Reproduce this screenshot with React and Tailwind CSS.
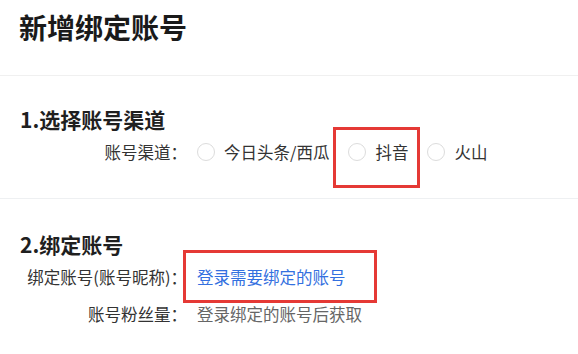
import React from "react";

const Radio = ({ label, marked }) => (
  <span className="relative flex items-center mr-[19px]">
    <span className="w-[18px] h-[18px] rounded-full border border-[#dcdcdc] bg-white" />
    <span className="ml-[9px] text-[#333]">{label}</span>
    {marked && (
      <span className="absolute left-[-15px] top-[-13px] w-[87px] h-[61px] border-[3px] border-[#e53935]" />
    )}
  </span>
);

const App = () => {
  return (
    <div
      className="w-[578px] h-[354px] bg-white overflow-hidden text-[#333]"
      style={{ fontFamily: '"Noto Sans CJK SC", "Noto Sans", sans-serif' }}
    >
      <div className="h-[76px] pt-[12px] pl-[19px] border-b border-[#f0f0f0]">
        <h1 className="text-[28px] leading-[30px] font-bold text-[#1a1a1a]">
          新增绑定账号
        </h1>
      </div>

      <section className="pt-[29px] pb-[34px] border-b border-[#eef0f2]">
        <h2 className="pl-[20px] text-[21px] leading-[28px] font-semibold text-[#1f1f1f]">
          1.选择账号渠道
        </h2>
        <div className="mt-[7px] flex items-center text-[16.5px] leading-[24px]">
          <span className="w-[187px] text-right">账号渠道：</span>
          <div className="ml-[10px] flex items-center">
            <Radio label="今日头条/西瓜" />
            <Radio label="抖音" marked />
            <Radio label="火山" />
          </div>
        </div>
      </section>

      <section className="pt-[31px]">
        <h2 className="pl-[20px] text-[21px] leading-[28px] font-semibold text-[#1f1f1f]">
          2.绑定账号
        </h2>
        <div className="mt-[7px] flex items-center text-[16.5px] leading-[24px]">
          <span className="w-[187px] text-right">绑定账号(账号昵称)：</span>
          <span className="relative ml-[10px] text-[#3370e0]">
            登录需要绑定的账号
            <span className="absolute left-[-14px] top-[-15px] w-[194px] h-[53px] border-[3px] border-[#e53935]" />
          </span>
        </div>
        <div className="mt-[13px] flex items-center text-[16.5px] leading-[24px]">
          <span className="w-[187px] text-right">账号粉丝量：</span>
          <span className="ml-[10px] text-[#666]">登录绑定的账号后获取</span>
        </div>
      </section>
    </div>
  );
};

export default App;
